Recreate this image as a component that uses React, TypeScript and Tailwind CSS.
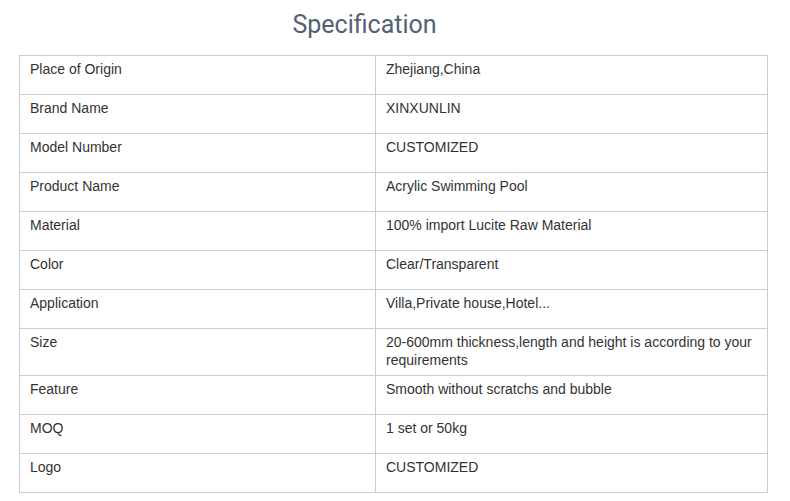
import React from "react";

const rows: [string, string][] = [
  ["Place of Origin", "Zhejiang,China"],
  ["Brand Name", "XINXUNLIN"],
  ["Model Number", "CUSTOMIZED"],
  ["Product Name", "Acrylic Swimming Pool"],
  ["Material", "100% import Lucite Raw Material"],
  ["Color", "Clear/Transparent"],
  ["Application", "Villa,Private house,Hotel..."],
  ["Size", "20-600mm thickness,length and height is according to your requirements"],
  ["Feature", "Smooth without scratchs and bubble"],
  ["MOQ", "1 set or 50kg"],
  ["Logo", "CUSTOMIZED"],
];

export default function App() {
  return (
    <div className="w-[790px] h-[501px] bg-white overflow-hidden">
      <div className="pl-[19px] w-[768px]">
        <h1
          className="h-[55px] pt-[10px] text-center pr-[58px] text-[25px] leading-[30px] text-[#536174] font-normal"
          style={{ fontFamily: "Roboto, 'Noto Sans', sans-serif" }}
        >
          Specification
        </h1>
        <table
          className="w-[749px] border-collapse text-[14px] leading-[18px] text-[#333333]"
          style={{ fontFamily: "'Liberation Sans', Arial, sans-serif" }}
        >
          <tbody>
            {rows.map(([k, v]) => (
              <tr key={k}>
                <td className="w-[356px] h-[39px] align-top border border-[#cccccc] px-[10px] pt-[4px] pb-[6px]">
                  {k}
                </td>
                <td className="align-top border border-[#cccccc] px-[10px] pt-[4px] pb-[6px]">{v}</td>
              </tr>
            ))}
          </tbody>
        </table>
      </div>
    </div>
  );
}
